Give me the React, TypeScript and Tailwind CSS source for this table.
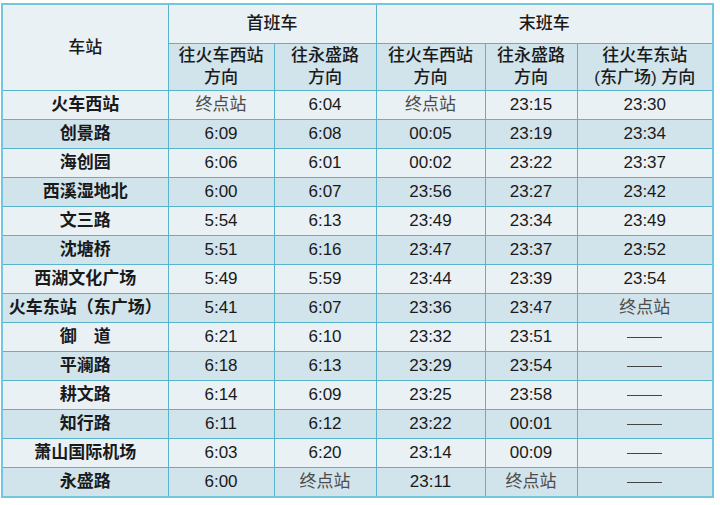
import React from "react";

const rows: string[][] = [
  ["火车西站", "终点站", "6:04", "终点站", "23:15", "23:30"],
  ["创景路", "6:09", "6:08", "00:05", "23:19", "23:34"],
  ["海创园", "6:06", "6:01", "00:02", "23:22", "23:37"],
  ["西溪湿地北", "6:00", "6:07", "23:56", "23:27", "23:42"],
  ["文三路", "5:54", "6:13", "23:49", "23:34", "23:49"],
  ["沈塘桥", "5:51", "6:16", "23:47", "23:37", "23:52"],
  ["西湖文化广场", "5:49", "5:59", "23:44", "23:39", "23:54"],
  ["火车东站（东广场）", "5:41", "6:07", "23:36", "23:47", "终点站"],
  ["御　道", "6:21", "6:10", "23:32", "23:51", "—"],
  ["平澜路", "6:18", "6:13", "23:29", "23:54", "—"],
  ["耕文路", "6:14", "6:09", "23:25", "23:58", "—"],
  ["知行路", "6:11", "6:12", "23:22", "00:01", "—"],
  ["萧山国际机场", "6:03", "6:20", "23:14", "00:09", "—"],
  ["永盛路", "6:00", "终点站", "23:11", "终点站", "—"],
];

function Cell({ v }: { v: string }) {
  if (v === "终点站") {
    return <span className="text-[#4d4d4d] font-normal">终点站</span>;
  }
  if (v === "—") {
    return <span className="inline-block w-[35px] h-px bg-[#444] align-middle" />;
  }
  return <span className="text-[#1a1a1a]">{v}</span>;
}

export default function App() {
  return (
    <div className="w-[720px] h-[505px] bg-white pt-[3px] pl-[1px]">
      <div
        className="w-[713px] border-2 border-[#72c6dd]"
        style={{ fontFamily: '"Liberation Sans", "Noto Sans CJK SC", sans-serif' }}
      >
        <table className="w-[709px] table-fixed border-collapse border-hidden text-[17px] leading-[21px] text-center">
          <colgroup>
            <col className="w-[165px]" />
            <col className="w-[106px]" />
            <col className="w-[102px]" />
            <col className="w-[109px]" />
            <col className="w-[92px]" />
            <col className="w-[135px]" />
          </colgroup>
          <thead>
            <tr className="h-[38px]">
              <th rowSpan={2} className="border border-[#58b4cc] bg-[#e9f1f5] font-medium text-[#1a1a1a]">
                车站
              </th>
              <th colSpan={2} className="border border-[#58b4cc] bg-[#e9f1f5] font-medium text-[#1a1a1a]">
                首班车
              </th>
              <th colSpan={3} className="border border-[#58b4cc] bg-[#e9f1f5] font-medium text-[#1a1a1a]">
                末班车
              </th>
            </tr>
            <tr className="h-[47px]">
              {[
                ["往火车西站", "方向"],
                ["往永盛路", "方向"],
                ["往火车西站", "方向"],
                ["往永盛路", "方向"],
                ["往火车东站", "(东广场) 方向"],
              ].map((h, i) => (
                <th key={i} className="border border-[#58b4cc] bg-[#d1e3eb] font-medium text-[#1a1a1a] leading-[22px]">
                  <div>{h[0]}</div>
                  <div>{h[1]}</div>
                </th>
              ))}
            </tr>
          </thead>
          <tbody>
            {rows.map((r, i) => (
              <tr key={i} className={`h-[29px] ${i % 2 === 0 ? "bg-[#e9f1f5]" : "bg-[#d1e3eb]"}`}>
                {r.map((c, j) =>
                  j === 0 ? (
                    <td key={j} className="border border-[#58b4cc] font-bold text-[#1a1a1a] whitespace-nowrap">
                      {c}
                    </td>
                  ) : (
                    <td key={j} className="border border-[#58b4cc]">
                      <Cell v={c} />
                    </td>
                  )
                )}
              </tr>
            ))}
          </tbody>
        </table>
      </div>
    </div>
  );
}
